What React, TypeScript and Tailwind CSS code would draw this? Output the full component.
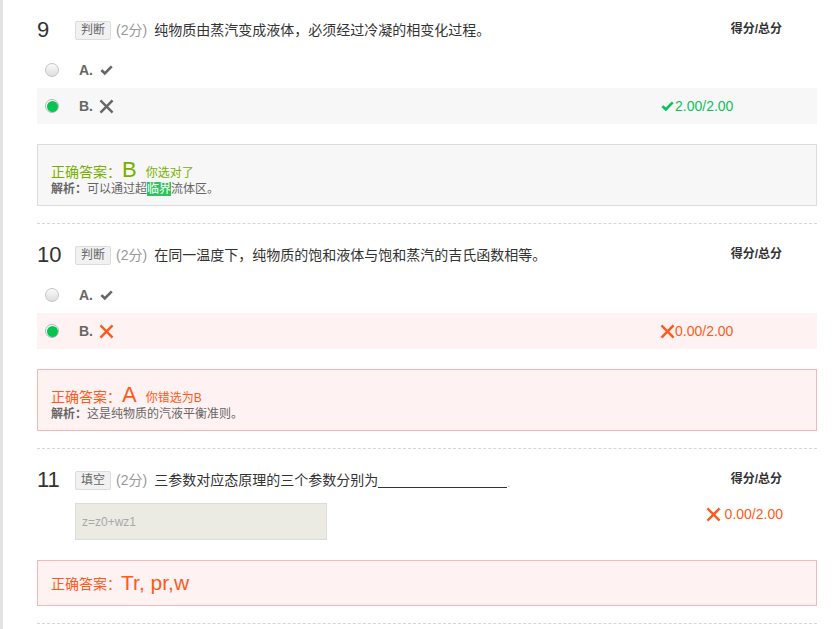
import React from 'react';

const CJK = "font-['Liberation_Sans','Noto_Sans_CJK_SC',sans-serif]";

function CheckIcon({ className }: { className?: string }) {
  return (
    <svg viewBox="0 0 16 16" className={className} fill="currentColor">
      <path d="M1.5 8.6 L3.6 6.6 L6.2 9.1 L12.6 2.6 L14.6 4.6 L6.2 13 Z" />
    </svg>
  );
}

function CrossIcon({ className }: { className?: string }) {
  return (
    <svg viewBox="0 0 16 16" className={className} stroke="currentColor" strokeWidth={2.6} strokeLinecap="square">
      <path d="M2.5 2.5 L13.5 13.5 M13.5 2.5 L2.5 13.5" />
    </svg>
  );
}

function Radio({ checked }: { checked?: boolean }) {
  return checked ? (
    <span className="w-[14px] h-[14px] rounded-full border border-[#b5b5b5] bg-white flex items-center justify-center">
      <span className="w-[11px] h-[11px] rounded-full bg-[#05c44f]" />
    </span>
  ) : (
    <span className="w-[14px] h-[14px] rounded-full border border-[#c4c4c4] bg-gradient-to-b from-[#fafafa] to-[#dedede]" />
  );
}

function Header({ num, tag, text, tail }: { num: string; tag: string; text: React.ReactNode; tail?: React.ReactNode }) {
  return (
    <div className="flex items-center h-[22px]">
      <span className="w-[38px] text-[22px] leading-none text-[#333] font-['Liberation_Sans',sans-serif]">{num}</span>
      <span className="h-[19px] px-[5px] flex items-center text-[12px] text-[#666] bg-[#f1f1f1] border border-[#dcdcdc] rounded-[2px]">
        {tag}
      </span>
      <span className="ml-[5px] text-[14px] text-[#999]">(2分)</span>
      <span className="ml-[7px] flex-1 text-[14px] text-[#333] flex items-center">
        {text}
        {tail}
      </span>
      <span className="w-[70px] mr-[35px] text-right text-[12px] font-bold text-[#333] -mt-[2px]">得分/总分</span>
    </div>
  );
}

function Option({ label, mark, row, score }: { label: string; mark: React.ReactNode; row?: string; score?: React.ReactNode }) {
  return (
    <div className={`flex items-center h-[36px] pl-[8px] ${row ?? ''}`}>
      <Radio checked={!!row} />
      <span className="ml-[20px] text-[14px] font-bold text-[#666] font-['Liberation_Sans',sans-serif]">{label}</span>
      <span className="ml-[6px]">{mark}</span>
      <div className="flex-1" />
      <div className="w-[157px] flex items-center text-[14px] font-['Liberation_Sans',sans-serif]">{score}</div>
    </div>
  );
}

export default function App() {
  return (
    <div className={`w-[838px] h-[629px] overflow-hidden bg-white border-l-[3px] border-[#e3e3e3] pl-[34px] ${CJK}`}>
      <div className="w-[780px]">
        {/* 9 */}
        <div className="pt-[19px] pb-[17px] border-b border-dashed border-[#d6d6d6]">
          <Header num="9" tag="判断" text="纯物质由蒸汽变成液体，必须经过冷凝的相变化过程。" />
          <div className="mt-[11px]">
            <Option label="A." mark={<CheckIcon className="w-[15px] h-[15px] text-[#666]" />} />
            <Option
              label="B."
              row="bg-[#f7f7f7]"
              mark={<CrossIcon className="w-[15px] h-[15px] text-[#666]" />}
              score={
                <span className="flex items-center text-[#0cc25a]">
                  <CheckIcon className="w-[15px] h-[15px]" />
                  <span>2.00/2.00</span>
                </span>
              }
            />
          </div>
          <div className="mt-[20px] h-[62px] border border-[#dcdcdc] bg-[#f7f7f7] pl-[13px] pt-[14px]">
            <div className="flex items-baseline h-[22px] text-[#79b000]">
              <span className="text-[14px]">正确答案：</span>
              <span className="ml-[1px] text-[22px] font-['Liberation_Sans',sans-serif] leading-none">B</span>
              <span className="ml-[9px] text-[12px]">你选对了</span>
            </div>
            <div className="text-[12px] leading-[16px] text-[#666]">
              <span className="font-bold">解析：</span>可以通过超<span className="bg-[#2cc45c] text-white">临界</span>流体区。
            </div>
          </div>
        </div>

        {/* 10 */}
        <div className="pt-[20px] pb-[17px] border-b border-dashed border-[#d6d6d6]">
          <Header num="10" tag="判断" text="在同一温度下，纯物质的饱和液体与饱和蒸汽的吉氏函数相等。" />
          <div className="mt-[11px]">
            <Option label="A." mark={<CheckIcon className="w-[15px] h-[15px] text-[#666]" />} />
            <Option
              label="B."
              row="bg-[#fff2f2]"
              mark={<CrossIcon className="w-[15px] h-[15px] text-[#ff5a1a]" />}
              score={
                <span className="flex items-center text-[#ff5a1a]">
                  <CrossIcon className="w-[15px] h-[15px]" />
                  <span>0.00/2.00</span>
                </span>
              }
            />
          </div>
          <div className="mt-[20px] h-[62px] border border-[#f5b7b7] bg-[#fff2f2] pl-[13px] pt-[14px]">
            <div className="flex items-baseline h-[22px] text-[#ff5a1a]">
              <span className="text-[14px]">正确答案：</span>
              <span className="ml-[1px] text-[22px] font-['Liberation_Sans',sans-serif] leading-none">A</span>
              <span className="ml-[9px] text-[12px]">你错选为B</span>
            </div>
            <div className="text-[12px] leading-[16px] text-[#666]">
              <span className="font-bold">解析：</span>这是纯物质的汽液平衡准则。
            </div>
          </div>
        </div>

        {/* 11 */}
        <div className="pt-[20px] pb-[17px] border-b border-dashed border-[#d6d6d6]">
          <Header
            num="11"
            tag="填空"
            text="三参数对应态原理的三个参数分别为"
            tail={
              <>
                <span className="w-[129px] h-[15px] border-b border-[#333]" />
                <span className="text-[10px] text-[#999] self-end">.</span>
              </>
            }
          />
          <div className="mt-[12px] flex items-start">
            <div className="ml-[38px] w-[252px] h-[37px] border border-[#dcdcdc] bg-[#ebebe4] pl-[6px] flex items-center text-[12px] text-[#a8a8a8] font-['Liberation_Sans',sans-serif]">
              z=z0+wz1
            </div>
            <div className="flex-1" />
            <div className="mr-[34px] mt-[1px] flex items-center text-[14px] text-[#ff5a1a] font-['Liberation_Sans',sans-serif]">
              <CrossIcon className="w-[15px] h-[15px]" />
              <span className="ml-[4px]">0.00/2.00</span>
            </div>
          </div>
          <div className="mt-[20px] h-[46px] border border-[#f5b7b7] bg-[#fff2f2] pl-[13px] flex items-center text-[#ff5a1a]">
            <span className="text-[14px] mt-[3px]">正确答案：</span>
            <span className="text-[21px] font-['Liberation_Sans',sans-serif]">Tr, pr,w</span>
          </div>
        </div>
      </div>
    </div>
  );
}
